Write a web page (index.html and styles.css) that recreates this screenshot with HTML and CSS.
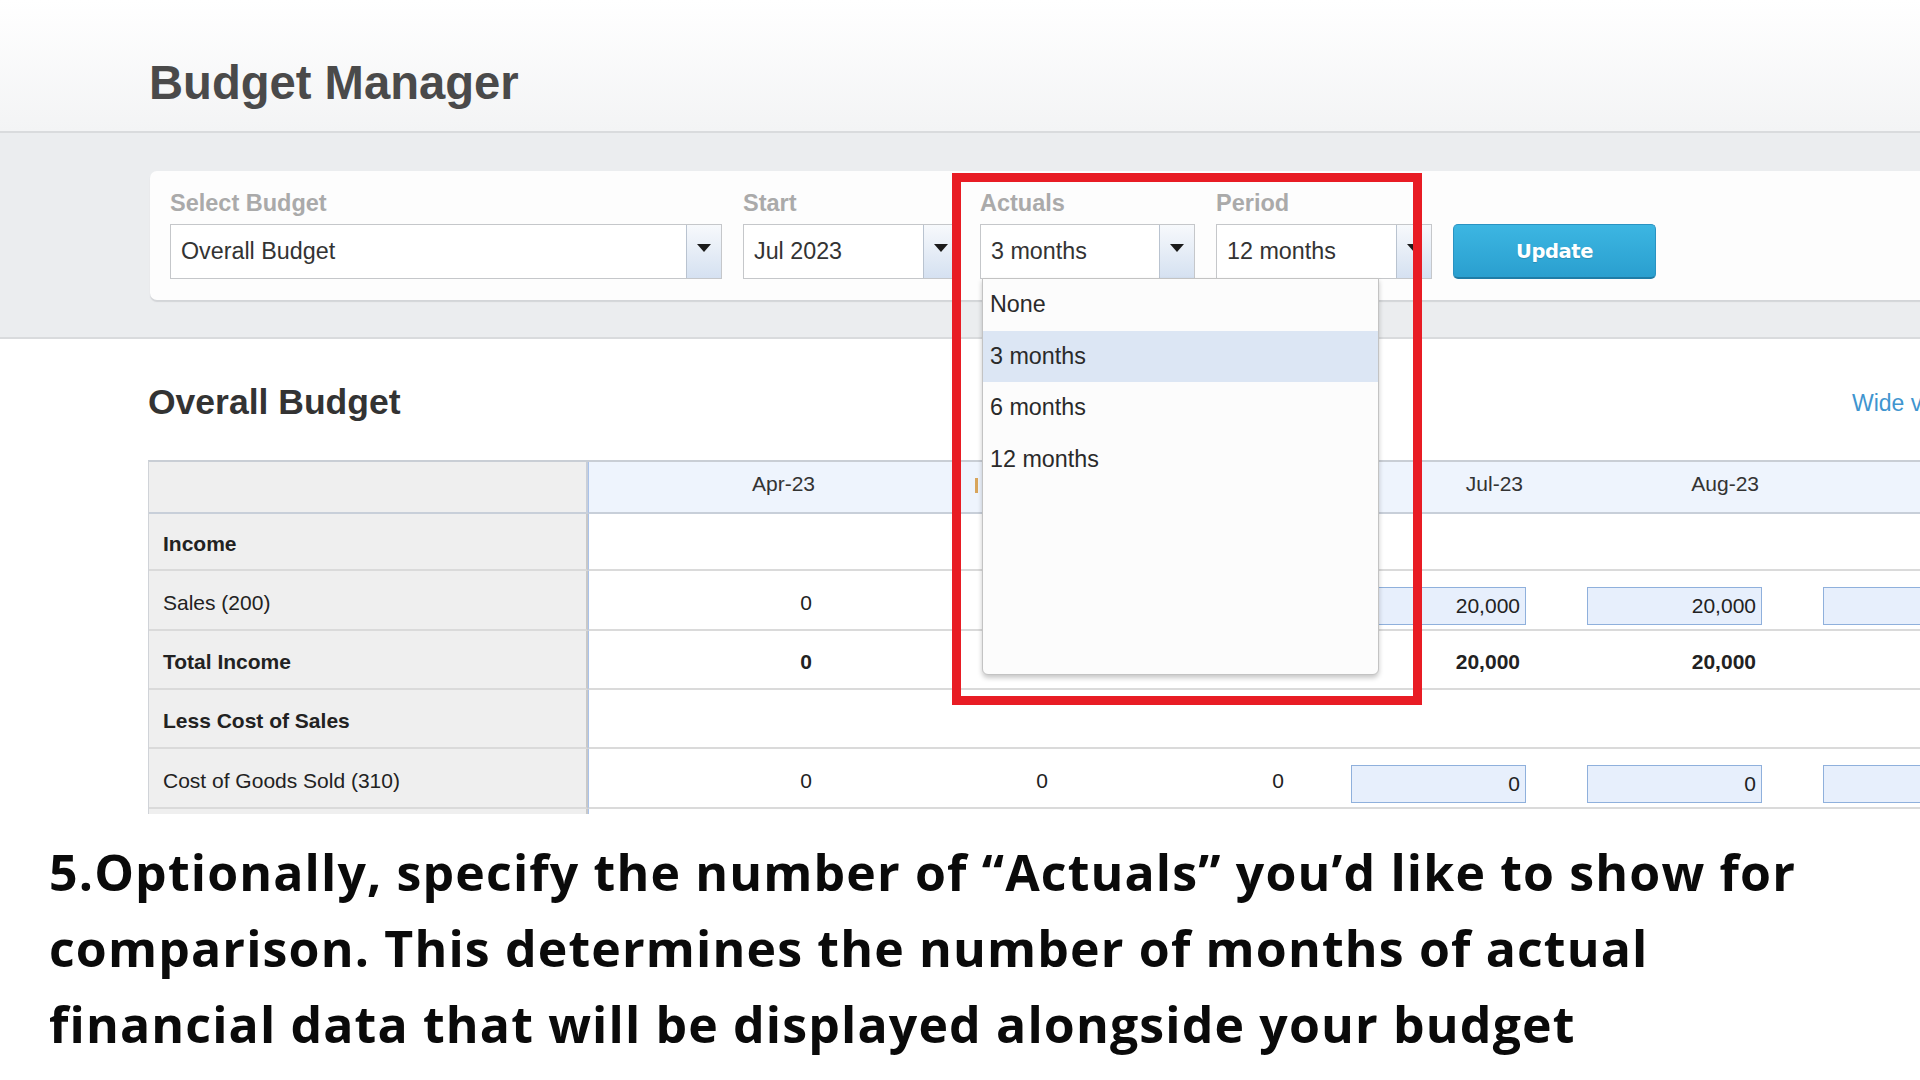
FILE: index.html
```html
<!DOCTYPE html>
<html lang="en">
<head>
<meta charset="utf-8">
<title>Budget Manager</title>
<link rel="stylesheet" href="styles.css">
</head>
<body>
<div class="shot">
  <header class="topbar">
    <h1 class="title">Budget Manager</h1>
  </header>

  <section class="band">
    <div class="card">
      <div class="field f-budget">
        <label class="lbl">Select Budget</label>
        <div class="select"><span class="val">Overall Budget</span><span class="btn"><i class="tri"></i></span></div>
      </div>
      <div class="field f-start">
        <label class="lbl">Start</label>
        <div class="select"><span class="val">Jul 2023</span><span class="btn"><i class="tri"></i></span></div>
      </div>
      <div class="field f-actuals">
        <label class="lbl">Actuals</label>
        <div class="select"><span class="val">3 months</span><span class="btn"><i class="tri"></i></span></div>
        <ul class="dropdown">
          <li>None</li>
          <li class="hl">3 months</li>
          <li>6 months</li>
          <li>12 months</li>
        </ul>
      </div>
      <div class="field f-period">
        <label class="lbl">Period</label>
        <div class="select"><span class="val">12 months</span><span class="btn"><i class="tri"></i></span></div>
      </div>
      <button class="update">Update</button>
    </div>
  </section>

  <main class="content">
    <div class="content-head">
      <h2 class="sub">Overall Budget</h2>
      <a class="wide">Wide view</a>
    </div>
    <table class="grid">
      <colgroup>
        <col class="c-label"><col class="c-m"><col class="c-m"><col class="c-m"><col class="c-m"><col class="c-m"><col class="c-m">
      </colgroup>
      <thead>
        <tr>
          <th class="lab"></th>
          <th>Apr-23</th>
          <th><span class="mark"></span>May-23</th>
          <th>Jun-23</th>
          <th>Jul-23</th>
          <th>Aug-23</th>
          <th>Sep-23</th>
        </tr>
      </thead>
      <tbody>
        <tr class="r-income">
          <td class="lab b">Income</td>
          <td></td><td></td><td></td><td></td><td></td><td></td>
        </tr>
        <tr class="r-tall">
          <td class="lab">Sales (200)</td>
          <td class="num">0</td><td class="num">0</td><td class="num">0</td>
          <td class="inp"><span class="box">20,000</span></td>
          <td class="inp"><span class="box">20,000</span></td>
          <td class="inp"><span class="box">20,000</span></td>
        </tr>
        <tr>
          <td class="lab b">Total Income</td>
          <td class="num b">0</td><td class="num b">0</td><td class="num b">0</td>
          <td class="num b">20,000</td><td class="num b">20,000</td><td class="num b">20,000</td>
        </tr>
        <tr>
          <td class="lab b">Less Cost of Sales</td>
          <td></td><td></td><td></td><td></td><td></td><td></td>
        </tr>
        <tr class="r-tall">
          <td class="lab">Cost of Goods Sold (310)</td>
          <td class="num">0</td><td class="num">0</td><td class="num">0</td>
          <td class="inp"><span class="box">0</span></td>
          <td class="inp"><span class="box">0</span></td>
          <td class="inp"><span class="box">0</span></td>
        </tr>
        <tr>
          <td class="lab"></td>
          <td></td><td></td><td></td><td></td><td></td><td></td>
        </tr>
      </tbody>
    </table>
  </main>

  <div class="annot"></div>
</div>

<div class="caption">
  <p class="line">5.Optionally, specify the number of “Actuals” you’d like to show for</p>
  <p class="line">comparison. This determines the number of months of actual</p>
  <p class="line">financial data that will be displayed alongside your budget</p>
</div>
</body>
</html>
```

FILE: styles.css
```css
* { box-sizing: border-box; }
html, body { margin: 0; padding: 0; }
body {
  width: 1920px;
  height: 1080px;
  overflow: hidden;
  background: #ffffff;
  font-family: "Liberation Sans", Arial, sans-serif;
  color: #222;
}

.shot {
  position: relative;
  height: 814px;
  overflow: hidden;
  background: #ffffff;
}

/* ---------- header ---------- */
.topbar {
  height: 133px;
  padding: 59px 0 0 149px;
  background: linear-gradient(#ffffff, #f3f4f5);
  border-bottom: 2px solid #d9dbdd;
}
.title {
  margin: 0;
  font-size: 47.2px;
  line-height: 48px;
  font-weight: 700;
  color: #4a4a4a;
}

/* ---------- filter band ---------- */
.band {
  height: 206px;
  padding: 38px 0 0 150px;
  background: #ebedef;
  border-bottom: 2px solid #d9dbdd;
}
.card {
  display: flex;
  align-items: flex-end;
  gap: 21px;
  width: 1860px;
  height: 129px;
  padding: 19px 0 0 20px;
  background: #fdfdfd;
  border-radius: 7px;
  box-shadow: 0 2px 1px #d3d5d8;
}
.field {
  position: relative;
  display: flex;
  flex-direction: column;
  gap: 8px;
  padding-bottom: 21px;
}
.lbl {
  font-size: 23.5px;
  line-height: 26px;
  font-weight: 700;
  color: #aaaaaa;
}
.f-budget .select { width: 552px; }
.f-start .select { width: 216px; }
.f-actuals .select { width: 215px; }
.f-period .select { width: 216px; }

.select {
  display: flex;
  height: 55px;
  background: #ffffff;
  border: 1px solid #c5c7ca;
}
.select .val {
  flex: 1;
  padding-left: 10px;
  font-size: 23.3px;
  line-height: 53px;
  color: #333;
}
.select .btn {
  display: flex;
  align-items: center;
  justify-content: center;
  width: 35px;
  padding-bottom: 8px;
  border-left: 1px solid #b9c3d0;
  background: linear-gradient(#f7f9fc, #d5e1f1);
}
.tri {
  width: 0;
  height: 0;
  border-left: 7px solid transparent;
  border-right: 7px solid transparent;
  border-top: 8px solid #1b1b1b;
}

.update {
  width: 203px;
  height: 55px;
  margin-bottom: 21px;
  border: 1px solid #2a93c2;
  border-bottom: 2px solid #1f7ca6;
  border-radius: 5px;
  background: linear-gradient(#3cb6e2, #2a9fcf);
  color: #ffffff;
  font-family: "DejaVu Sans", Verdana, sans-serif;
  font-weight: 700;
  font-size: 19.5px;
  letter-spacing: -0.4px;
  text-shadow: 0 1px 1px rgba(0,0,0,0.15);
}

/* dropdown list */
.dropdown {
  position: absolute;
  top: 88px;
  left: 2px;
  z-index: 5;
  width: 397px;
  height: 397px;
  margin: 0;
  padding: 0;
  list-style: none;
  background: #fcfcfc;
  border: 1px solid #c3c3c3;
  border-radius: 0 0 6px 6px;
  box-shadow: 0 3px 5px rgba(0,0,0,0.22);
}
.dropdown li {
  height: 51.5px;
  padding-left: 7px;
  font-size: 23.3px;
  line-height: 51px;
  color: #2a2a2a;
}
.dropdown li.hl { background: #dce6f4; }

/* ---------- content ---------- */
.content {
  padding: 43px 0 0 148px;
}
.content-head {
  display: flex;
  align-items: center;
  height: 40px;
}
.sub {
  flex: 0 0 1704px;
  margin: 0;
  font-size: 35.5px;
  line-height: 40px;
  font-weight: 700;
  color: #333;
}
.wide {
  padding-top: 3px;
  font-size: 23px;
  color: #3f95cf;
  white-space: nowrap;
}

.grid {
  margin-top: 38px;
  width: 1855px;
  table-layout: fixed;
  border-collapse: separate;
  border-spacing: 0;
  border-top: 2px solid #c9ced5;
  border-left: 1px solid #d0d3d8;
  font-size: 21px;
}
.c-label { width: 439px; }
.c-m { width: 236px; }

.grid th {
  height: 52px;
  padding: 0 9px 7px 0;
  text-align: right;
  font-weight: 400;
  color: #333;
  background: #eef4fd;
  border-bottom: 2px solid #c8cfd9;
}
.mark {
  display: inline-block;
  width: 3px;
  height: 15px;
  margin-right: 3px;
  vertical-align: -2px;
  background: #d8a55c;
}

.grid td {
  height: 59px;
  padding: 5px 0 0 0;
  border-bottom: 2px solid #dadada;
  background: #ffffff;
  color: #222;
}
.grid .r-income td { height: 57px; }
.grid .r-tall td { height: 60px; }
.grid .lab {
  padding-left: 14px;
  background: #efefef;
  border-right: 2px solid #c9c9c9;
}
.grid thead .lab { border-right: 2px solid #c9cfd9; }
.grid tr > :nth-child(2) { border-left: 1px solid #a9c2ea; }
.grid .b { font-weight: 700; }
.grid .num {
  text-align: right;
  padding-right: 12px;
}
.grid .inp {
  text-align: right;
  padding: 11px 6px 0 0;
}
.box {
  display: inline-block;
  width: 175px;
  height: 38px;
  padding-right: 5px;
  line-height: 36px;
  text-align: right;
  background: #e7effc;
  border: 1px solid #8fb0dc;
}

/* annotation frame */
.annot {
  position: absolute;
  left: 952px;
  top: 173px;
  width: 470px;
  height: 532px;
  z-index: 10;
  border: 9px solid #e81c24;
}

/* ---------- caption ---------- */
.caption {
  padding: 20px 0 0 49px;
}
.line {
  margin: 0;
  font-family: "Open Sans", Lato, sans-serif;
  font-weight: 700;
  font-size: 50px;
  line-height: 76px;
  letter-spacing: 1.15px;
  color: #0a0a0a;
  white-space: nowrap;
}
```
